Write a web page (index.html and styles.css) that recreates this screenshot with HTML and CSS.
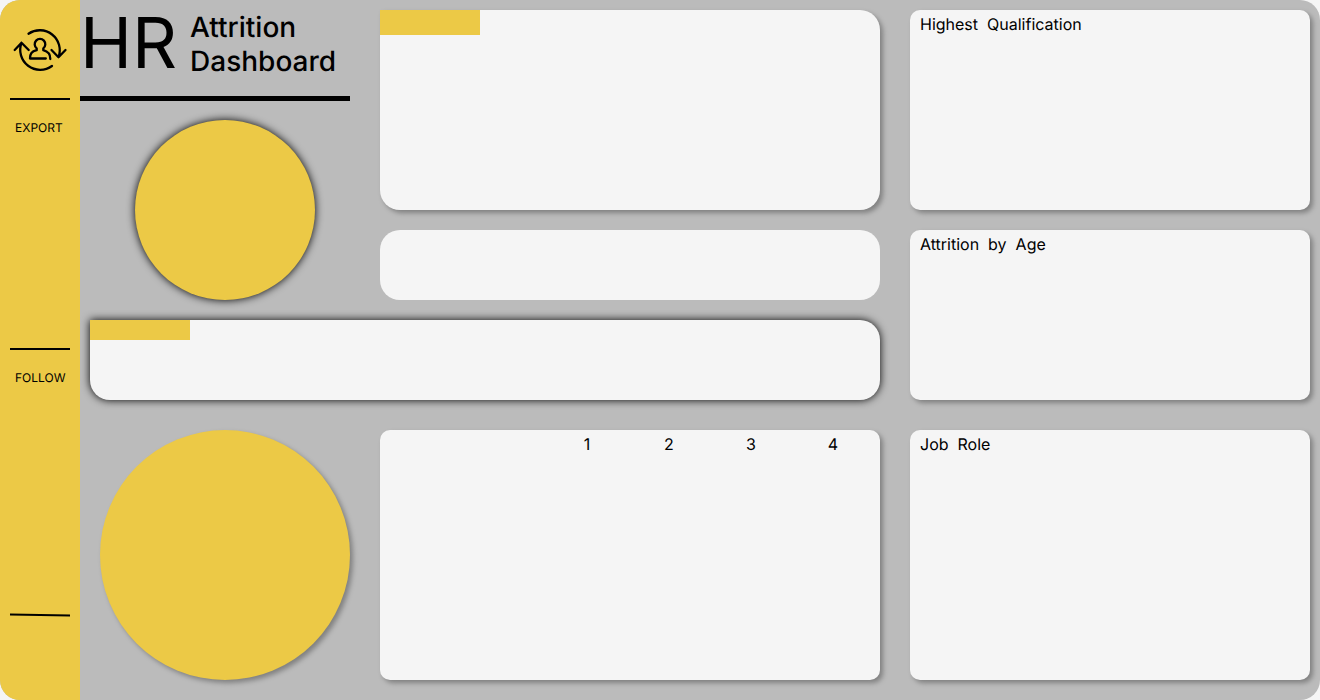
FILE: index.html
```html
<!DOCTYPE html>
<html lang="en">
<head>
<meta charset="utf-8">
<meta name="viewport" content="width=device-width, initial-scale=1">
<title>HR Attrition Dashboard</title>
<link rel="stylesheet" href="styles.css">
</head>
<body>
<div class="app">
  <aside class="sidebar">
    <div class="brand">
      <svg class="logo" viewBox="0 0 60 48" aria-hidden="true">
        <path d="M18.500 9.700A20 20 0 0 1 48.500 33.200M41.500 26L48.500 33.200L55.500 26"/>
        <path d="M42 42A20 20 0 0 1 11.500 18.800M4.700 26L11.500 18.800L18.700 26"/>
        <path d="M35.800 34.500H20C20 29.500 21.600 27.600 26.700 26.200V24.400A5.300 5.300 0 1 1 33.300 24.400V26.200C38.400 27.600 40.300 29.800 40.300 35"/>
      </svg>
    </div>
    <section class="side-section">
      <h2 class="side-title">EXPORT</h2>
    </section>
    <section class="side-section side-section-follow">
      <h2 class="side-title">FOLLOW</h2>
    </section>
    <div class="side-rule"></div>
  </aside>
  <main class="board">
    <div class="overview">
      <div class="intro">
        <header class="masthead">
          <h1 class="title"><span class="title-hr">HR</span> <span class="title-name">Attrition<br>Dashboard</span></h1>
        </header>
        <div class="disc disc-small"></div>
      </div>
      <div class="summary">
        <section class="card card-round card-tall"><div class="tab tab-tall"></div></section>
        <section class="card card-round card-flat"></section>
      </div>
      <section class="card card-round banner"><div class="tab"></div></section>
    </div>
    <div class="stack">
      <section class="card"><h2 class="card-title">Highest&nbsp; Qualification</h2></section>
      <section class="card"><h2 class="card-title">Attrition&nbsp; by&nbsp; Age</h2></section>
    </div>
    <div class="details">
      <div class="disc disc-large"></div>
      <section class="card">
        <div class="ratings"><span>1</span><span>2</span><span>3</span><span>4</span></div>
      </section>
    </div>
    <section class="card"><h2 class="card-title">Job&nbsp; Role</h2></section>
  </main>
</div>
</body>
</html>
```
FILE: styles.css
```css
* {
  box-sizing: border-box;
}

body {
  margin: 0;
  background: #f5f5f5;
  color: #000;
  font-family: Inter, "Liberation Sans", sans-serif;
  font-size: 16px;
  line-height: 20px;
  text-rendering: geometricPrecision;
}

h1, h2 {
  margin: 0;
  font-weight: 400;
}

.app {
  display: flex;
  min-height: 100vh;
  overflow: hidden;
  border-radius: 20px;
  background: #bbb;
}

.sidebar {
  display: flex;
  flex-direction: column;
  flex: none;
  width: 80px;
  padding: 0 10px 84px;
  background: #ecc946;
}

.brand {
  display: flex;
  align-items: center;
  justify-content: center;
  height: 98px;
  padding-bottom: 2px;
}

.logo {
  width: 60px;
  height: 48px;
  fill: none;
  stroke: #000;
  stroke-width: 2.3;
  stroke-linecap: round;
  stroke-linejoin: round;
}

.side-section {
  height: 250px;
  padding: 20px 5px;
  border-top: 2px solid #000;
}

.side-section-follow {
  flex: 1;
}

.side-title {
  font-size: 12px;
  line-height: 16px;
}

.side-rule {
  height: 2px;
  background: #000;
  transform: rotate(1deg);
}

.board {
  display: grid;
  flex: 1;
  grid-template-columns: 2fr 1fr;
  grid-template-rows: minmax(390px, auto) minmax(250px, 1fr);
  gap: 30px;
  padding: 10px 10px 20px 0;
}

.overview {
  display: grid;
  grid-template-columns: 270px 1fr;
  grid-template-rows: 290px 80px;
  gap: 20px 30px;
}

.summary {
  display: grid;
  grid-template-rows: 200px 70px;
  gap: 20px;
}

.masthead {
  height: 91px;
  border-bottom: 5px solid #000;
}

.title {
  display: flex;
  gap: 13px;
}

.title-hr {
  font-size: 70px;
  line-height: 66px;
}

.title-name {
  font-size: 28px;
  font-weight: 500;
  line-height: 34px;
}

.disc {
  border-radius: 50%;
  background: #ecc946;
}

.disc-small {
  width: 180px;
  height: 180px;
  margin: 19px auto 0 55px;
  box-shadow: 0 0 8px #000;
}

.disc-large {
  width: 250px;
  height: 250px;
  margin-left: 20px;
  box-shadow: 3px 3px 5px gray;
}

.card {
  overflow: hidden;
  border-radius: 10px;
  background: #f5f5f5;
  box-shadow: 3px 3px 5px gray;
}

.card-round {
  border-radius: 20px;
}

.card-tall,
.banner {
  border-top-left-radius: 0;
}

.card-flat {
  box-shadow: none;
}

.banner {
  grid-column: 1 / -1;
  margin-left: 10px;
  box-shadow: 0 0 8px #000;
}

.tab {
  width: 100px;
  height: 20px;
  background: #ecc946;
}

.tab-tall {
  height: 25px;
}

.card-title {
  padding: 4px 10px;
  font-size: 16px;
}

.stack {
  display: grid;
  grid-template-rows: 200px 170px;
  gap: 20px;
}

.details {
  display: grid;
  grid-template-columns: 270px 1fr;
  gap: 30px;
}

.ratings {
  display: grid;
  grid-template-columns: repeat(4, 82px);
  justify-content: end;
  padding: 4px 6px;
  text-align: center;
}
```
